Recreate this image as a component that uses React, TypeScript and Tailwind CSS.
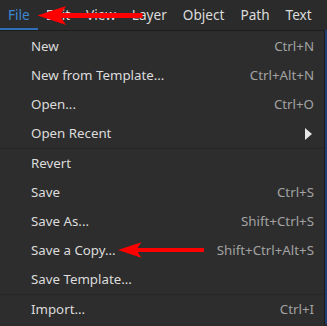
import React from "react";

const MENUBAR = ["File", "Edit", "View", "Layer", "Object", "Path", "Text"];

type Item = { label: string; shortcut?: string; submenu?: boolean } | "sep";

const ITEMS: Item[] = [
  { label: "New", shortcut: "Ctrl+N" },
  { label: "New from Template...", shortcut: "Ctrl+Alt+N" },
  { label: "Open...", shortcut: "Ctrl+O" },
  { label: "Open Recent", submenu: true },
  "sep",
  { label: "Revert" },
  { label: "Save", shortcut: "Ctrl+S" },
  { label: "Save As...", shortcut: "Shift+Ctrl+S" },
  { label: "Save a Copy...", shortcut: "Shift+Ctrl+Alt+S" },
  { label: "Save Template..." },
  "sep",
  { label: "Import...", shortcut: "Ctrl+I" },
];

function RedArrow({ className }: { className: string }) {
  return (
    <svg className={className} viewBox="0 0 110 22" fill="#ff0000">
      <path d="M0 11 L30 1 L25 8.5 L110 8.5 L110 13.5 L25 13.5 L30 21 Z" />
    </svg>
  );
}

export default function App() {
  return (
    <div
      className="relative w-[327px] h-[326px] overflow-hidden bg-[#2b2b2b] text-[13.3px] text-[#dcdcdc]"
      style={{ fontFamily: '"Noto Sans", "Open Sans", sans-serif' }}
    >
      {/* menu bar */}
      <div className="flex h-[30px] items-center pl-[8px] gap-[16px] text-[13.6px]">
        {MENUBAR.map((m, i) => (
          <span key={m} className={i === 0 ? "text-[#3d86d1]" : ""}>
            {m}
          </span>
        ))}
      </div>
      <div className="absolute left-0 top-[28px] h-[2px] w-[38px] bg-[#2f6fb8]" />

      {/* dropdown */}
      <div className="flex">
        <div className="w-[325px] border-t border-r border-[#1c1c1c] bg-[#2d2d2d] pt-[1px]">
          {ITEMS.map((it, i) =>
            it === "sep" ? (
              <div key={i} className="h-px bg-[#262626]" />
            ) : (
              <div key={i} className="flex h-[29px] items-center pl-[31px] pr-[10px]">
                <span className="flex-1">{it.label}</span>
                {it.shortcut && <span className="text-[#a3a3a3]">{it.shortcut}</span>}
                {it.submenu && (
                  <svg width="8" height="12" viewBox="0 0 8 12" className="mr-[1px]">
                    <path d="M0 0 L7 6 L0 12 Z" fill="#e6e6e6" />
                  </svg>
                )}
              </div>
            )
          )}
        </div>
        <div className="flex-1 bg-[#1f3f73]" />
      </div>

      {/* annotation arrows */}
      <RedArrow className="absolute left-[36px] top-[5px] w-[108px] h-[21px]" />
      <RedArrow className="absolute left-[118px] top-[240px] w-[86px] h-[20px]" />
    </div>
  );
}
